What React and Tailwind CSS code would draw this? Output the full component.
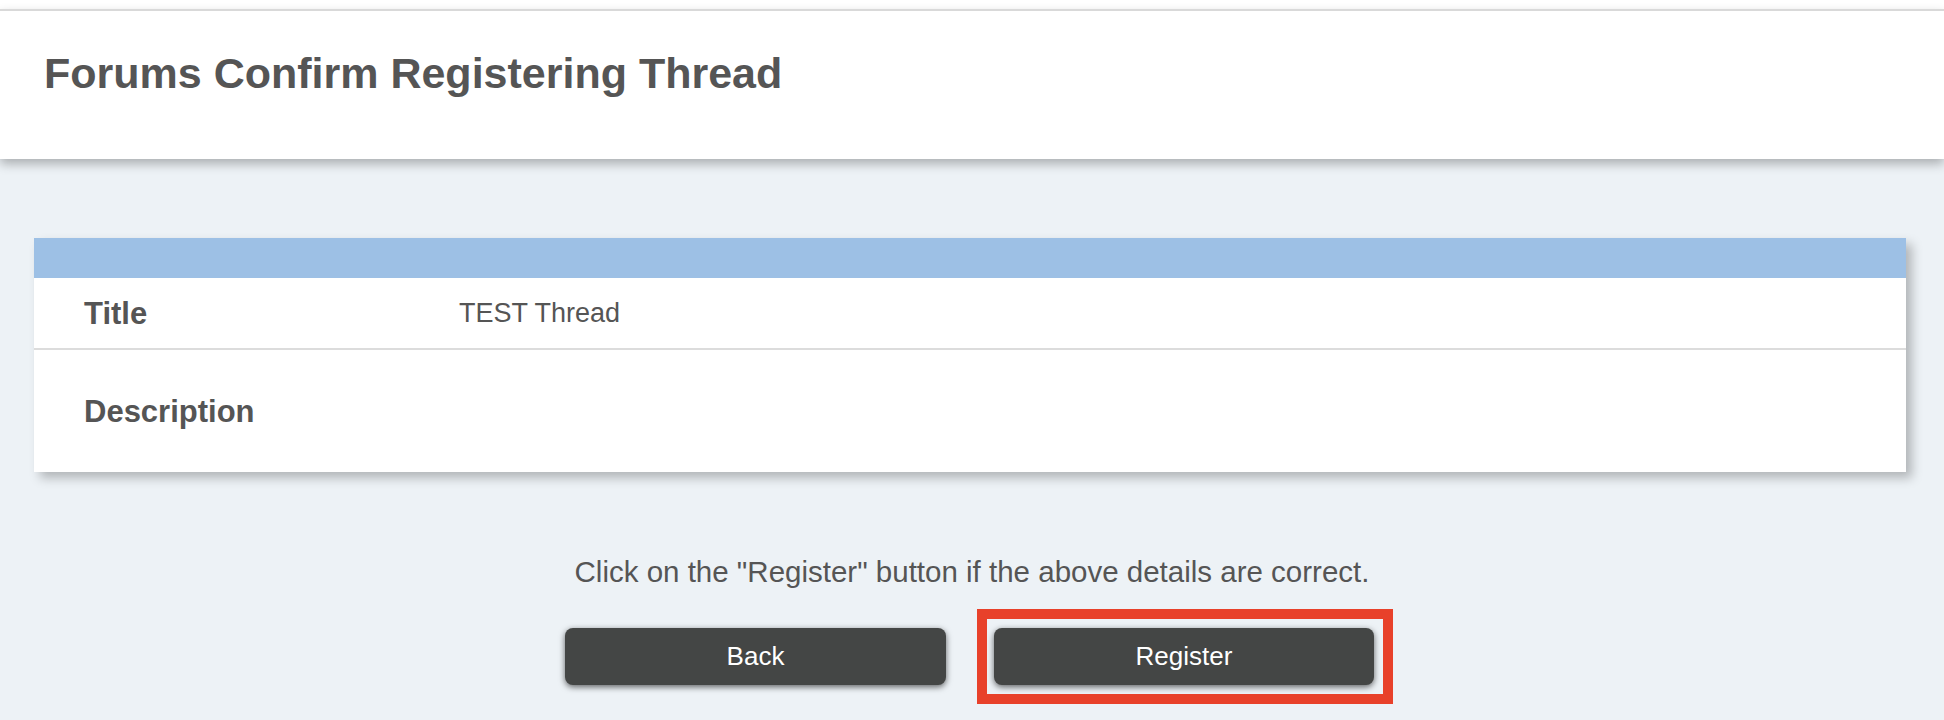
const rows = [
    { label: 'Title', value: 'TEST Thread', height: 'h-[72px]' },
    { label: 'Description', value: '', height: 'h-[122px]' },
];

const DetailRow = ({ label, value, height, last }) => {
    return (
        <div className={`flex ${height} items-center ${last ? '' : 'border-b-2 border-[#dcdcdc]'}`}>
            <div className="w-[425px] pl-[50px] text-[31px] font-bold leading-none text-[#555555]">{label}</div>
            <div className="text-[27px] leading-none text-[#555555]">{value}</div>
        </div>
    );
};

const App = () => {
    return (
        <div className="min-h-[720px] bg-[#edf2f6] font-['Liberation_Sans',Arial,sans-serif]">
            {/* Page header */}
            <div className="h-[9px] bg-white" />
            <div className="relative z-10 h-[150px] border-t-2 border-[#d9d9d9] bg-white pl-[44px] pt-[41px] shadow-[0_5px_10px_rgba(0,0,0,0.28)]">
                <h1 className="text-[43px] font-bold leading-none text-[#555555]">Forums Confirm Registering Thread</h1>
            </div>

            {/* Detail card */}
            <div className="ml-[34px] mr-[38px] mt-[79px] bg-white shadow-[6px_6px_10px_rgba(0,0,0,0.25)]">
                <div className="h-[40px] bg-[#9dc0e5]" />
                {rows.map((row, index) => (
                    <DetailRow key={row.label} {...row} last={index === rows.length - 1} />
                ))}
            </div>

            {/* Confirm actions */}
            <p className="mt-[85px] text-center text-[29.5px] leading-none text-[#555555]">Click on the "Register" button if the above details are correct.</p>
            <div className="mt-[41px] flex justify-center gap-[48px] pr-[5px]">
                <button type="button" className="h-[57px] w-[381px] rounded-[8px] bg-[#444645] text-[26px] text-white shadow-[0_2px_6px_rgba(0,0,0,0.6)]">
                    Back
                </button>
                <div className="relative">
                    <button type="button" className="h-[57px] w-[380px] rounded-[8px] bg-[#444645] text-[26px] text-white shadow-[0_2px_6px_rgba(0,0,0,0.6)]">
                        Register
                    </button>
                    <div className="pointer-events-none absolute -bottom-[19px] -left-[17px] -right-[19px] -top-[19px] border-[10px] border-[#e8412a]" />
                </div>
            </div>
        </div>
    );
};

export default App;
